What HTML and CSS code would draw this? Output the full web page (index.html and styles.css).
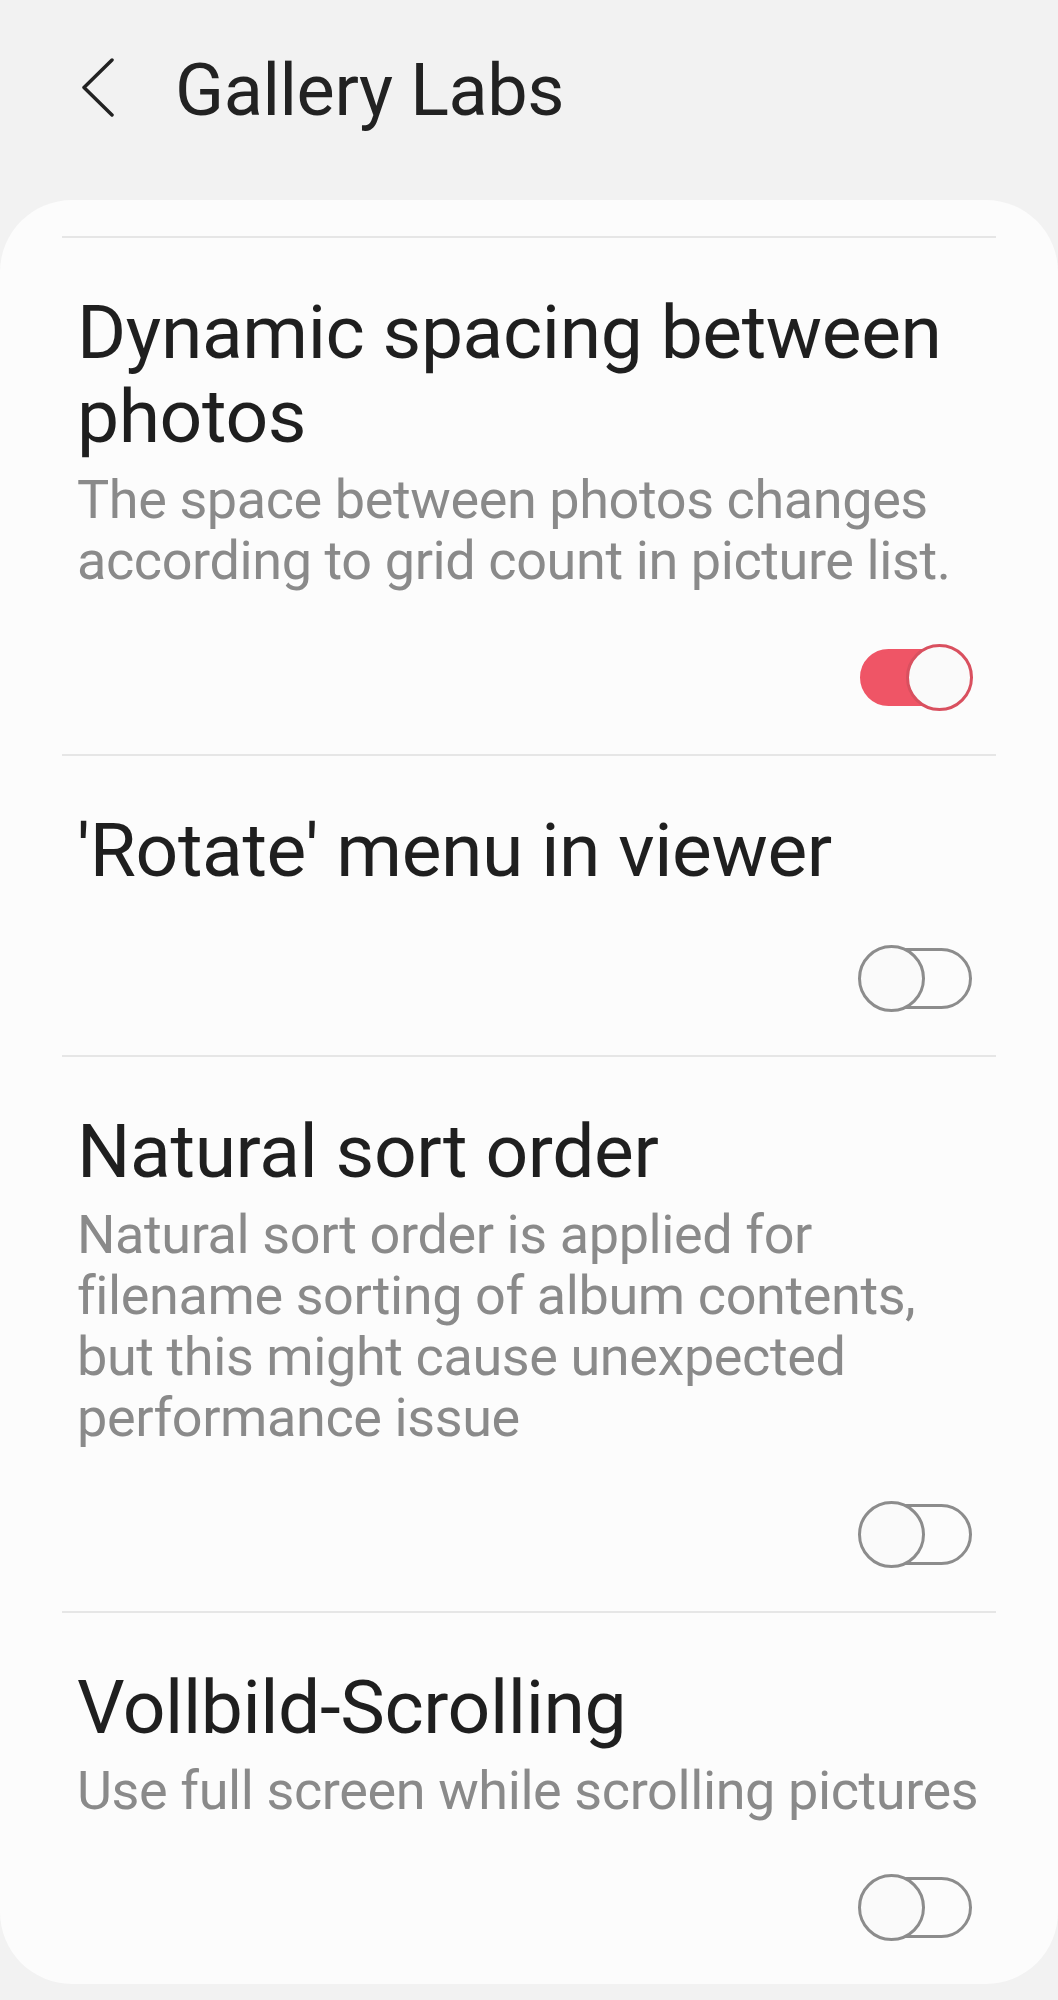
FILE: index.html
```html
<!DOCTYPE html>
<html lang="en">
<head>
    <meta charset="UTF-8">
    <meta name="viewport" content="width=device-width, initial-scale=1.0">
    <title>Gallery Labs</title>
    <link rel="stylesheet" href="styles.css">
</head>
<body>
    <div class="header">
        <svg class="back" viewBox="0 0 36 60" width="36" height="60">
            <polyline points="32,3 4,30.5 32,58" fill="none" stroke="#222" stroke-width="3.5" stroke-linecap="round" stroke-linejoin="round"/>
        </svg>
        <h1>Gallery Labs</h1>
    </div>

    <div class="card">
        <div class="list">
            <div class="item">
                <div class="title">Dynamic spacing between photos</div>
                <div class="desc">The space between photos changes according to grid count in picture list.</div>
                <div class="toggle-row">
                    <div class="switch on"><span class="track"></span><span class="thumb"></span></div>
                </div>
            </div>
            <div class="item">
                <div class="title">'Rotate' menu in viewer</div>
                <div class="toggle-row">
                    <div class="switch"><span class="track"></span><span class="thumb"></span></div>
                </div>
            </div>
            <div class="item">
                <div class="title">Natural sort order</div>
                <div class="desc">Natural sort order is applied for filename sorting of album contents, but this might cause unexpected performance issue</div>
                <div class="toggle-row">
                    <div class="switch"><span class="track"></span><span class="thumb"></span></div>
                </div>
            </div>
            <div class="item">
                <div class="title">Vollbild-Scrolling</div>
                <div class="desc">Use full screen while scrolling pictures</div>
                <div class="toggle-row">
                    <div class="switch"><span class="track"></span><span class="thumb"></span></div>
                </div>
            </div>
        </div>
    </div>
</body>
</html>
```

FILE: styles.css
```css
body {
    margin: 0;
    background-color: #f2f2f2;
    font-family: Roboto, "Noto Sans", sans-serif;
}
.header {
    height: 200px;
    box-sizing: border-box;
    padding: 48px 0 0 80px;
    display: flex;
    align-items: flex-start;
    gap: 59px;
}
.back {
    margin-top: 9px;
    flex-shrink: 0;
}
.header h1 {
    margin: 0;
    font-size: 72px;
    font-weight: 400;
    line-height: 86px;
    letter-spacing: -0.4px;
    color: #222;
}
.card {
    background: #fcfcfc;
    border-radius: 72px;
    padding-top: 36px;
}
.list {
    margin: 0 62px;
}
.item {
    border-top: 2px solid #e6e6e6;
    padding: 52px 0 43px 15px;
}
.title {
    font-size: 75px;
    line-height: 84px;
    letter-spacing: -0.4px;
    color: #1f1f1f;
}
.desc {
    margin-top: 11px;
    font-size: 54px;
    line-height: 61px;
    letter-spacing: -0.4px;
    color: #8a8a8a;
}
.toggle-row {
    display: flex;
    justify-content: flex-end;
    margin-top: 53px;
    padding-right: 22px;
}
.switch {
    position: relative;
    width: 116px;
    height: 67px;
}
.track {
    position: absolute;
    left: 1px;
    right: 2px;
    top: 3px;
    bottom: 3px;
    box-sizing: border-box;
    border: 3px solid #8c8c8c;
    border-radius: 31px;
}
.thumb {
    position: absolute;
    top: 0;
    left: 0;
    width: 67px;
    height: 67px;
    box-sizing: border-box;
    border: 3px solid #8c8c8c;
    border-radius: 50%;
    background: #fafafa;
}
.switch.on .track {
    left: 2px;
    right: 14px;
    top: 5px;
    bottom: 5px;
    border-color: #ef5566;
    background: #ef5566;
}
.switch.on .thumb {
    left: auto;
    right: 1px;
    border-color: #d9505f;
}
```
